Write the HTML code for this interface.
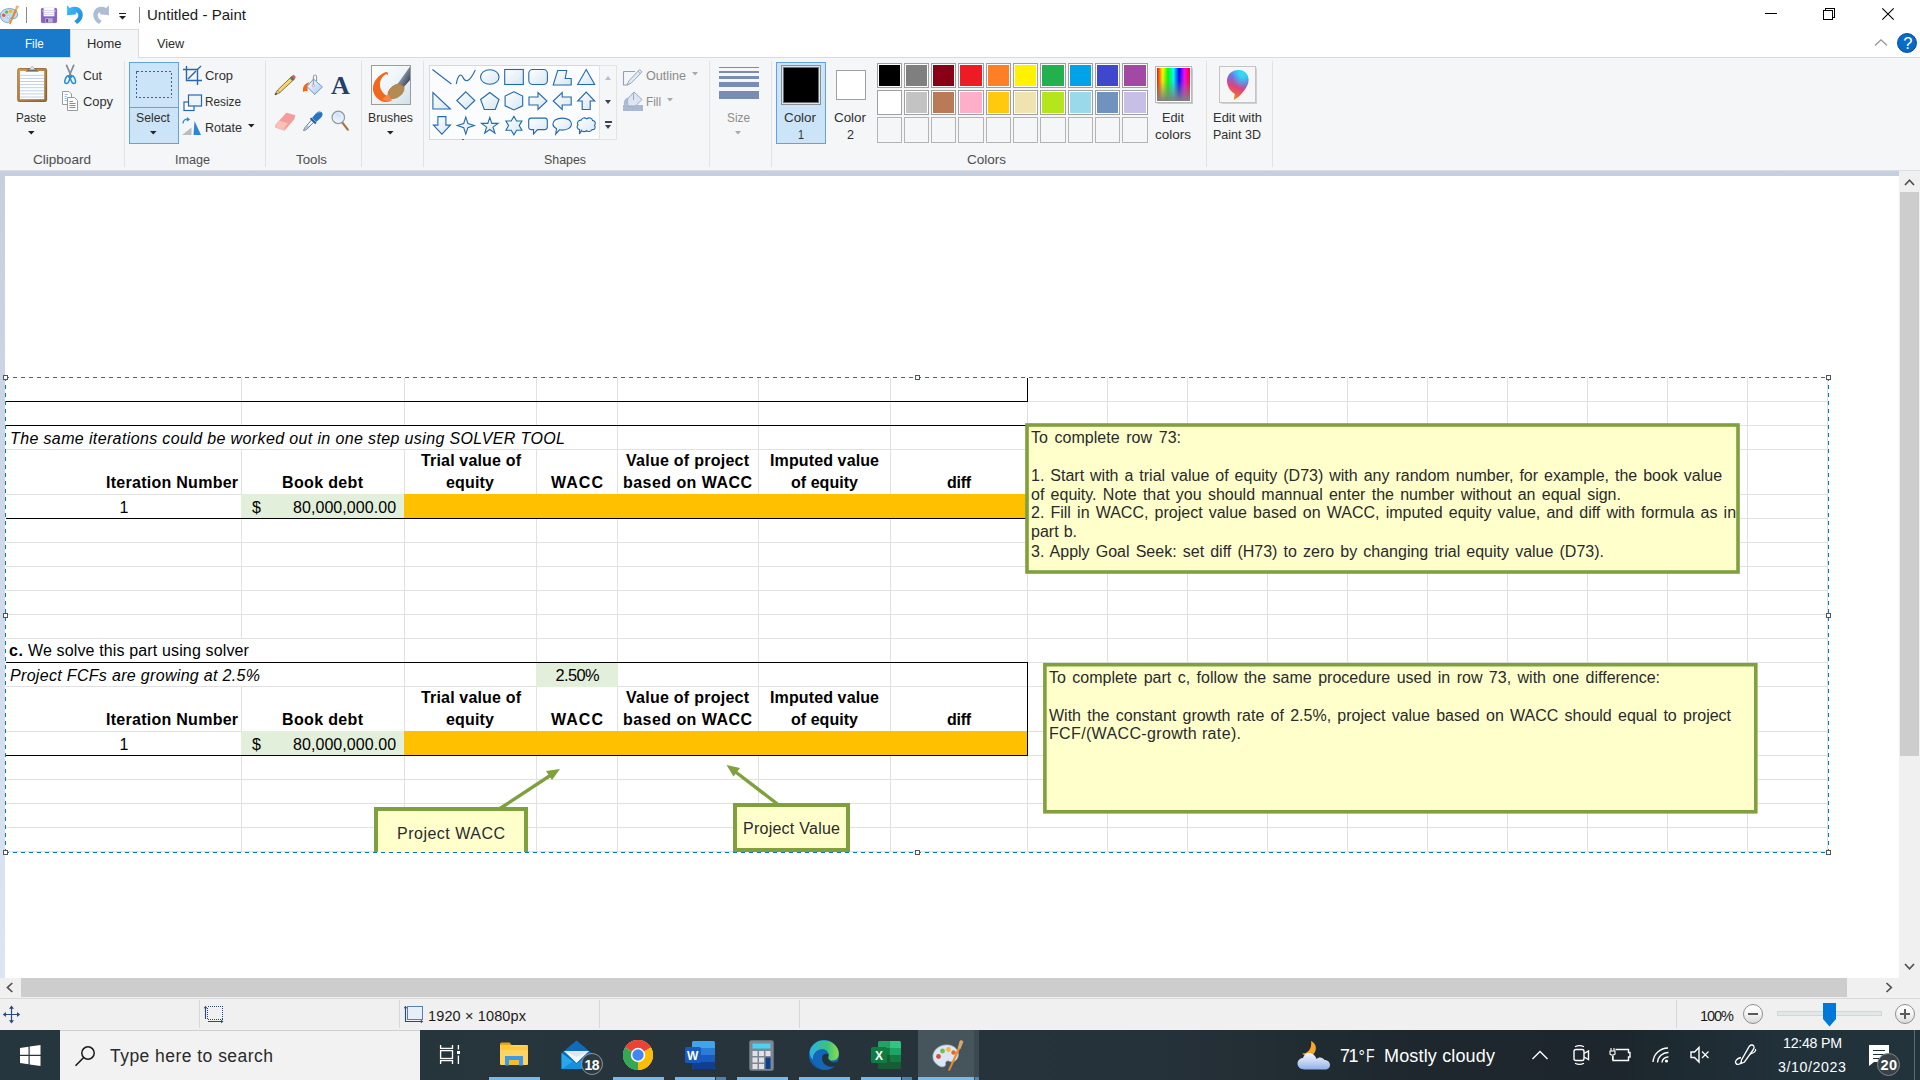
<!DOCTYPE html>
<html><head><meta charset="utf-8"><title>Untitled - Paint</title>
<style>
html,body{margin:0;padding:0}
body{width:1920px;height:1080px;overflow:hidden;position:relative;background:#fff;font-family:'Liberation Sans',sans-serif}
div,span,svg{box-sizing:border-box}
svg{position:absolute;overflow:visible}
</style></head><body>

<div style="position:absolute;left:0px;top:0px;width:1920px;height:30px;background:#fff"></div>
<div style="position:absolute;left:0px;top:30px;width:1920px;height:27px;background:#fff"></div>
<div style="position:absolute;left:0px;top:57px;width:1920px;height:114px;background:#f5f6f7;border-top:1px solid #dadbdc;border-bottom:1px solid #dcdde0"></div>
<div style="position:absolute;left:0px;top:171px;width:1920px;height:807px;background:linear-gradient(#c5cfe0,#dbe5f3)"></div>
<div style="position:absolute;left:5px;top:176px;width:1894px;height:802px;background:#fff"></div>
<div style="position:absolute;left:1899px;top:171px;width:21px;height:807px;background:#f0f0f0"></div>
<div style="position:absolute;left:1900px;top:192px;width:19px;height:564px;background:#cdcdcd"></div>
<div style="position:absolute;left:0px;top:978px;width:1920px;height:20px;background:#f0f0f0"></div>
<div style="position:absolute;left:21px;top:978px;width:1826px;height:19px;background:#cdcdcd"></div>
<div style="position:absolute;left:0px;top:998px;width:1920px;height:32px;background:#f0f0f0;border-top:1px solid #d9d9d9"></div>
<div style="position:absolute;left:0px;top:1030px;width:1920px;height:50px;background:linear-gradient(90deg,#25363f 0%,#27343b 35%,#263239 60%,#1d272d 74%,#1c262c 84%,#21313a 93%,#22333c 100%)"></div>
<svg style="left:0;top:0" width="30" height="30" viewBox="0 0 30 30">
<path d="M0.300 15.500 C0.300 11.500 4.500 8.600 9.500 8.600 C14.500 8.600 18 11.300 17.500 15 C17 18.500 14 19.200 12.300 18.300 C10.800 17.600 9.300 18.800 9.800 20.300 C10.400 22.200 8 23.300 5.300 22.300 C2.300 21.200 0.300 18.500 0.300 15.500Z" fill="#c3dcf1" stroke="#6f9bcb" stroke-width="0.900"/>
<circle cx="3.700" cy="15.200" r="1.700" fill="#e2564d"/><circle cx="6.600" cy="12.100" r="1.700" fill="#62b84a"/><circle cx="10.600" cy="11.300" r="1.700" fill="#f0b62e"/><circle cx="8.300" cy="16.500" r="1.300" fill="#eef5fb" stroke="#7fa5d0" stroke-width="0.500"/>
<path d="M9.300 23.800 L15.200 9.200 L16.900 9.900 L10.300 24Z" fill="#f08a24" stroke="#c96a18" stroke-width="0.400"/>
<path d="M15.200 9.300 L16 5.600 L19.300 6 L16.900 9.900Z" fill="#e7b469"/>
</svg>
<div style="position:absolute;left:26px;top:7px;width:1px;height:16px;background:#8a8a8a"></div>
<svg style="left:41px;top:8px" width="16" height="15" viewBox="0 0 16 15">
<rect x="0.400" y="0.400" width="15.200" height="14.200" rx="0.800" fill="#8763c6" stroke="#7650b8" stroke-width="0.800"/>
<rect x="2.600" y="0" width="10.800" height="8.300" fill="#fbfaff"/>
<rect x="2.600" y="2" width="10.800" height="0.700" fill="#cfc6e6"/><rect x="2.600" y="4" width="10.800" height="0.700" fill="#cfc6e6"/><rect x="2.600" y="6" width="10.800" height="0.700" fill="#cfc6e6"/>
<rect x="4.300" y="10.200" width="7.400" height="4.400" fill="#b9b3c6"/><rect x="5.200" y="11" width="1.800" height="3.200" fill="#6a4aa8"/>
<rect x="1.200" y="2.500" width="0.800" height="1" fill="#e6def5"/><rect x="14" y="2.500" width="0.800" height="1" fill="#e6def5"/>
</svg>
<svg style="left:0;top:0" width="120" height="30" viewBox="0 0 120 30">
<defs><linearGradient id="ug" x1="0" y1="0" x2="1" y2="1"><stop offset="0" stop-color="#3fc0ff"/><stop offset="1" stop-color="#1a84dc"/></linearGradient></defs>
<path d="M67.100 5.300 L69.800 8 C74.500 5.300 80.500 6.800 82.300 12 C83.900 17 81 21.500 77 24 L74.300 21 C77 19.300 78.800 17 78.200 14.600 C77.700 12.800 76.300 12.400 75.300 12.600 L76.500 14.300 L67.100 15.200Z" fill="url(#ug)"/>
<path d="M108.900 5.300 L106.200 8 C101.500 5.300 95.500 6.800 93.700 12 C92.100 17 95 21.500 99 24 L101.700 21 C99 19.300 97.200 17 97.800 14.600 C98.300 12.800 99.700 12.400 100.700 12.600 L99.500 14.300 L108.900 15.200Z" fill="#aebdd4"/>
</svg>
<div style="position:absolute;left:119px;top:13px;width:7px;height:1px;background:#222"></div>
<svg style="left:119px;top:16px" width="7" height="4" viewBox="0 0 7 4"><path d="M0 0 H7 L3.5 3.6Z" fill="#222"/></svg>
<div style="position:absolute;left:139px;top:7px;width:1px;height:16px;background:#9a9a9a"></div>
<span style="position:absolute;left:147px;top:7px;font-family:'Liberation Sans',sans-serif;font-size:15px;line-height:1;white-space:pre;color:#1a1a1a;font-weight:normal;font-style:normal;letter-spacing:0.04px;">Untitled - Paint</span>
<svg style="left:0;top:0" width="1920" height="30" shape-rendering="crispEdges">
<rect x="1765" y="13" width="12" height="1" fill="#000"/>
<rect x="1823.5" y="10.5" width="9" height="9" fill="none" stroke="#000"/>
<path d="M1825.5 10 V8.5 H1834.5 V17.5 H1833" fill="none" stroke="#000"/>
</svg>
<svg style="left:0;top:0" width="1920" height="30"><path d="M1882.3 8.3 L1893.7 19.7 M1893.7 8.3 L1882.3 19.7" stroke="#000" stroke-width="1.1" fill="none"/></svg>
<div style="position:absolute;left:0px;top:29px;width:70px;height:28px;background:#1979ca"></div>
<span style="position:absolute;left:25.3px;top:37px;font-family:'Liberation Sans',sans-serif;font-size:13.4px;line-height:1;white-space:pre;color:#fff;font-weight:normal;font-style:normal;transform:scaleX(0.8666);transform-origin:0 50%;">File</span>
<div style="position:absolute;left:70px;top:29px;width:69px;height:29px;background:#f5f6f7;border:1px solid #dadbdc;border-bottom:none"></div>
<span style="position:absolute;left:87px;top:37px;font-family:'Liberation Sans',sans-serif;font-size:13.4px;line-height:1;white-space:pre;color:#2b2b2b;font-weight:normal;font-style:normal;transform:scaleX(0.9655);transform-origin:0 50%;">Home</span>
<span style="position:absolute;left:157px;top:37px;font-family:'Liberation Sans',sans-serif;font-size:13.4px;line-height:1;white-space:pre;color:#2b2b2b;font-weight:normal;font-style:normal;transform:scaleX(0.9480);transform-origin:0 50%;">View</span>
<svg style="left:1874px;top:38px" width="14" height="9" viewBox="0 0 14 9"><path d="M1 7.5 L7 1.8 L13 7.5" fill="none" stroke="#8f8f8f" stroke-width="1.1"/></svg>
<div style="position:absolute;left:1897px;top:33px;width:20px;height:20px;background:radial-gradient(circle at 45% 40%,#0a72d2,#0063c0);border-radius:50%;border:1px solid #0a4c90"></div>
<span style="position:absolute;left:1903.3px;top:35px;font-family:'Liberation Sans',sans-serif;font-size:16.5px;line-height:1;white-space:pre;color:#fff;font-weight:normal;font-style:normal;">?</span>
<div style="position:absolute;left:124px;top:61px;width:1px;height:106px;background:#e1e2e4"></div>
<div style="position:absolute;left:265px;top:61px;width:1px;height:106px;background:#e1e2e4"></div>
<div style="position:absolute;left:361px;top:61px;width:1px;height:106px;background:#e1e2e4"></div>
<div style="position:absolute;left:423px;top:61px;width:1px;height:106px;background:#e1e2e4"></div>
<div style="position:absolute;left:709px;top:61px;width:1px;height:106px;background:#e1e2e4"></div>
<div style="position:absolute;left:771px;top:61px;width:1px;height:106px;background:#e1e2e4"></div>
<div style="position:absolute;left:1206px;top:61px;width:1px;height:106px;background:#e1e2e4"></div>
<div style="position:absolute;left:1272px;top:61px;width:1px;height:106px;background:#e1e2e4"></div>
<span style="position:absolute;left:33px;top:153px;font-family:'Liberation Sans',sans-serif;font-size:13.4px;line-height:1;white-space:pre;color:#4d4d4d;font-weight:normal;font-style:normal;transform:scaleX(1.0117);transform-origin:0 50%;">Clipboard</span>
<span style="position:absolute;left:175px;top:153px;font-family:'Liberation Sans',sans-serif;font-size:13.4px;line-height:1;white-space:pre;color:#4d4d4d;font-weight:normal;font-style:normal;transform:scaleX(0.9404);transform-origin:0 50%;">Image</span>
<span style="position:absolute;left:296px;top:153px;font-family:'Liberation Sans',sans-serif;font-size:13.4px;line-height:1;white-space:pre;color:#4d4d4d;font-weight:normal;font-style:normal;transform:scaleX(0.9915);transform-origin:0 50%;">Tools</span>
<span style="position:absolute;left:544px;top:153px;font-family:'Liberation Sans',sans-serif;font-size:13.4px;line-height:1;white-space:pre;color:#4d4d4d;font-weight:normal;font-style:normal;transform:scaleX(0.9247);transform-origin:0 50%;">Shapes</span>
<span style="position:absolute;left:967px;top:153px;font-family:'Liberation Sans',sans-serif;font-size:13.4px;line-height:1;white-space:pre;color:#4d4d4d;font-weight:normal;font-style:normal;transform:scaleX(1.0077);transform-origin:0 50%;">Colors</span>
<svg style="left:0;top:0" width="130" height="170" viewBox="0 0 130 170">
<defs><linearGradient id="cb" x1="0" y1="0" x2="1" y2="1"><stop offset="0" stop-color="#cfa060"/><stop offset="1" stop-color="#9a6a34"/></linearGradient></defs>
<rect x="17.300" y="68.100" width="29.800" height="33.800" rx="2.200" fill="url(#cb)"/>
<rect x="17.800" y="68.600" width="28.800" height="32.800" rx="1.800" fill="none" stroke="#8a5a28" stroke-width="0.600"/>
<rect x="20" y="71" width="24.200" height="28.200" fill="#ffffff"/>
<g stroke="#b9cde0" stroke-width="0.900"><path d="M20 75.300H44.200M20 78.400H44.200M20 81.500H44.200M20 84.600H44.200M20 87.700H44.200M20 90.800H44.200M20 93.900H44.200M20 97H44.200"/></g>
<path d="M25.600 72 L29.500 68.300 H34.900 L38.800 72Z" fill="#5a5a5a"/>
<path d="M28.800 69.800 L32.200 66.300 L35.600 69.800Z" fill="#e8e8e8" stroke="#8a8a8a" stroke-width="0.600"/>
<path d="M26.500 71.300 H38" stroke="#d8d8d8" stroke-width="0.700"/>
</svg>
<span style="position:absolute;left:16px;top:111px;font-family:'Liberation Sans',sans-serif;font-size:13.4px;line-height:1;white-space:pre;color:#303030;font-weight:normal;font-style:normal;transform:scaleX(0.8759);transform-origin:0 50%;">Paste</span>
<svg style="left:27.7px;top:130.8px" width="6.6" height="3.4" viewBox="0 0 6.6 3.4"><path d="M0 0 H6.6 L3.3 3.4Z" fill="#222"/></svg>
<svg style="left:0;top:0" width="130" height="170" viewBox="0 0 130 170">
<path d="M66.600 65.300 L71.600 77 M73.700 65.300 L68.700 77" stroke="#7f8b99" stroke-width="1.700" fill="none" stroke-linecap="round"/>
<ellipse cx="67.300" cy="79.700" rx="2.100" ry="4" fill="none" stroke="#1f8fdb" stroke-width="1.500" transform="rotate(22 67.300 79.700)"/>
<ellipse cx="73" cy="79.700" rx="2.100" ry="4" fill="none" stroke="#1f8fdb" stroke-width="1.500" transform="rotate(-22 73 79.700)"/>
</svg>
<span style="position:absolute;left:83px;top:69px;font-family:'Liberation Sans',sans-serif;font-size:13.4px;line-height:1;white-space:pre;color:#303030;font-weight:normal;font-style:normal;transform:scaleX(0.9115);transform-origin:0 50%;">Cut</span>
<svg style="left:61px;top:90px" width="18" height="22" viewBox="0 0 18 22">
<path d="M1.5 1.5 H8 L10.5 4 V14.5 H1.5Z" fill="#fff" stroke="#9a9a9a"/>
<path d="M6.5 7.5 H13.5 L16.5 10.5 V20.5 H6.5Z" fill="#fff" stroke="#9a9a9a"/>
<g stroke="#5b93d3" stroke-width="1"><path d="M8.5 11.5H12M8.5 13.5H14.5M8.5 15.5H14.5M8.5 17.5H14.5"/></g>
<g stroke="#a8c3e6" stroke-width="1"><path d="M3.5 4.5H7M3.5 6.5H6M3.5 8.5H6M3.5 10.5H6"/></g>
</svg>
<span style="position:absolute;left:83px;top:95px;font-family:'Liberation Sans',sans-serif;font-size:13.4px;line-height:1;white-space:pre;color:#303030;font-weight:normal;font-style:normal;transform:scaleX(0.9595);transform-origin:0 50%;">Copy</span>
<div style="position:absolute;left:129px;top:62px;width:50px;height:82px;background:#cce4f7;border:1px solid #62a2e4"></div>
<div style="position:absolute;left:130px;top:107px;width:48px;height:1px;background:#62a2e4"></div>
<svg style="left:136px;top:71px" width="36" height="27" shape-rendering="crispEdges"><rect x="0.5" y="0.5" width="35" height="26" fill="none" stroke="#2a66ad" stroke-dasharray="2 2"/></svg>
<span style="position:absolute;left:136px;top:111px;font-family:'Liberation Sans',sans-serif;font-size:13.4px;line-height:1;white-space:pre;color:#303030;font-weight:normal;font-style:normal;transform:scaleX(0.9135);transform-origin:0 50%;">Select</span>
<svg style="left:149.7px;top:130.8px" width="6.6" height="3.4" viewBox="0 0 6.6 3.4"><path d="M0 0 H6.6 L3.3 3.4Z" fill="#222"/></svg>
<svg style="left:182px;top:65px" width="21" height="21" viewBox="0 0 21 21">
<path d="M4.5 1 V15.5 H20 M1 4.5 H15.5 V20" fill="none" stroke="#2a66ad" stroke-width="1.4"/>
<path d="M6 14 L14 6" stroke="#2a66ad" stroke-width="1.4"/><path d="M15.5 4.5 L19 1" stroke="#2a66ad" stroke-width="1.2"/>
</svg>
<span style="position:absolute;left:205px;top:69px;font-family:'Liberation Sans',sans-serif;font-size:13.4px;line-height:1;white-space:pre;color:#303030;font-weight:normal;font-style:normal;transform:scaleX(0.9645);transform-origin:0 50%;">Crop</span>
<svg style="left:182.500px;top:93.500px" width="20" height="18" viewBox="0 0 20 18">
<rect x="1" y="8" width="10" height="8.5" fill="#fff" stroke="#2a66ad" stroke-width="1.2"/>
<rect x="5.5" y="1" width="13" height="11" fill="#eef4fb" stroke="#2a66ad" stroke-width="1.2"/>
</svg>
<span style="position:absolute;left:205px;top:95px;font-family:'Liberation Sans',sans-serif;font-size:13.4px;line-height:1;white-space:pre;color:#303030;font-weight:normal;font-style:normal;transform:scaleX(0.8794);transform-origin:0 50%;">Resize</span>
<svg style="left:181px;top:116px" width="21" height="20" viewBox="0 0 21 20">
<path d="M1 19 H10.5 V11.5Z" fill="#b9bdc2"/>
<path d="M12.5 19 H20 L13.5 5Z" fill="#2f86d4"/>
<path d="M2 7.5 C2 4 5 2.5 7.5 3.5" fill="none" stroke="#2f86d4" stroke-width="1.3"/><path d="M6.2 1 L9.2 3.8 L5.6 5.5Z" fill="#2f86d4"/>
</svg>
<span style="position:absolute;left:205px;top:121px;font-family:'Liberation Sans',sans-serif;font-size:13.4px;line-height:1;white-space:pre;color:#303030;font-weight:normal;font-style:normal;transform:scaleX(0.9378);transform-origin:0 50%;">Rotate</span>
<svg style="left:247.7px;top:124.3px" width="6.6" height="3.4" viewBox="0 0 6.6 3.4"><path d="M0 0 H6.6 L3.3 3.4Z" fill="#222"/></svg>
<svg style="left:0;top:0" width="430" height="170" viewBox="0 0 430 170">
<defs>
<linearGradient id="bk" x1="0" y1="0" x2="1" y2="1"><stop offset="0" stop-color="#ffffff"/><stop offset="1" stop-color="#a9c8ec"/></linearGradient>
<linearGradient id="brbg" x1="0" y1="0" x2="1" y2="1"><stop offset="0" stop-color="#ffffff"/><stop offset="0.600" stop-color="#eaf2f6"/><stop offset="1" stop-color="#cfe0e8"/></linearGradient>
<linearGradient id="hdl" x1="0" y1="0" x2="1" y2="1"><stop offset="0" stop-color="#e8eef4"/><stop offset="0.450" stop-color="#7f8ea2"/><stop offset="1" stop-color="#1d2430"/></linearGradient>
<radialGradient id="lens" cx="0.500" cy="0.300" r="0.700"><stop offset="0" stop-color="#cfe2f7"/><stop offset="1" stop-color="#f4f8fd"/></radialGradient>
</defs>
<!-- pencil -->
<path d="M275 94.800 L277.600 90 L291.600 76.600 L294.200 79.300 L279.900 92.500Z" fill="#f6d56c" stroke="#6d5b2b" stroke-width="0.800"/>
<path d="M275 94.800 L277.600 90 L279.900 92.500Z" fill="#e9d3a8" stroke="#6d5b2b" stroke-width="0.500"/><path d="M275 94.800 L275.900 92.700 L277.100 93.900Z" fill="#222"/>
<path d="M289.800 78.300 L291.600 76.600 L294.200 79.300 L292.400 81Z" fill="#3c8a4d"/>
<path d="M291.600 76.600 L292.600 75.700 C293.200 75.200 294 75.300 294.500 75.800 L295 76.400 C295.500 77 295.400 77.700 294.900 78.200 L294.200 79.300Z" fill="#e2606a" stroke="#8a3a3a" stroke-width="0.400"/>
<!-- bucket -->
<path d="M303.300 92 C302 88 304 83.500 309.500 82 C307 85.500 307.500 89 307.800 91.300 C306.300 90.600 304.800 91.200 303.300 92Z" fill="#f2691c"/>
<path d="M313.500 79 L322.400 87 L314.600 94.400 L307 86.600Z" fill="url(#bk)" stroke="#5a8fd2" stroke-width="0.900"/>
<path d="M313.400 85.300 V77 C313.400 74.300 316.600 74.300 316.600 77 V81" fill="none" stroke="#9a9a9a" stroke-width="1.100"/><circle cx="313.400" cy="85.600" r="1.100" fill="#fff" stroke="#8a8a8a" stroke-width="0.600"/>
<!-- eraser -->
<path d="M275.800 124.800 L286.400 113.100 L295 115.500 L293.800 119.400 L284.400 130.300 L275.400 127.200Z" fill="#f59c9c" stroke="#eb8f8f" stroke-width="0.500"/>
<path d="M275.800 124.800 L279.500 120.800 L288 123.200 L284.600 127.200 L284.400 130.300 L275.400 127.200Z" fill="#fbc0b4"/>
<!-- dropper -->
<path d="M303.600 130.600 L304.600 128 L311.500 120 L313.700 122.200 L306.500 129.600Z" fill="#f2f6fa" stroke="#5a5f66" stroke-width="0.800"/>
<path d="M304.600 128.300 L307.500 125 L309 126.500 L306 129.600Z" fill="#9cc4ea"/>
<path d="M309.800 118.800 L315.200 124.200 L316.600 122.800 L311.200 117.400Z" fill="#1e5ea8"/>
<path d="M312 118 L315.800 113.500 C317.200 111.600 319.800 110.800 321.500 112 C323.200 113.400 322.800 115.800 321.200 117.500 L316.200 122Z" fill="#2c72c2"/>
<path d="M316.500 113.500 C317.800 112 319.500 111.800 320.500 112.500" fill="none" stroke="#7fb2e8" stroke-width="0.900"/>
<!-- magnifier -->
<path d="M342.600 122.800 L347.800 129.600" stroke="#a8723c" stroke-width="2.200" stroke-linecap="round"/>
<circle cx="338.300" cy="117.400" r="6.200" fill="url(#lens)" stroke="#8f979f" stroke-width="1.200"/>
<!-- brushes -->
<rect x="371.500" y="65.500" width="39" height="39" fill="url(#brbg)" stroke="#9c9c9c"/>
<path d="M410 66.500 L410 80 L402.500 88.500 L397.500 84Z" fill="url(#hdl)"/>
<ellipse cx="396" cy="91.300" rx="9.200" ry="6" transform="rotate(-38 396 91.300)" fill="#b58a52" stroke="#94693a" stroke-width="0.500"/>
<path d="M384.500 72.500 C386.500 71.300 388.500 72.300 388 74 C387.600 75.200 386.300 75 386.600 74 C385.500 74.300 384.300 75.300 383.300 76.300 C379.500 80 379 86 381.500 90.500 C383 93.200 385.500 95.500 388.500 96.500 L391.500 100.300 C388 102.800 383 102.500 379.500 100 C374 96.500 371.800 90 373.500 84.500 C375 79.500 379.500 75 384.500 72.500Z" fill="#f2691c"/>
<path d="M382.500 98.800 L388.500 94.200 L392 100.200 C389 102.300 385.500 101.800 382.500 98.800Z" fill="#f9844a"/>
</svg>
<span style="position:absolute;left:331px;top:73px;font-family:'Liberation Serif',serif;font-size:26px;line-height:1;white-space:pre;color:#1f3f6e;font-weight:bold;font-style:normal;letter-spacing:0.72px;">A</span>
<span style="position:absolute;left:368px;top:111px;font-family:'Liberation Sans',sans-serif;font-size:13.4px;line-height:1;white-space:pre;color:#303030;font-weight:normal;font-style:normal;transform:scaleX(0.9160);transform-origin:0 50%;">Brushes</span>
<svg style="left:386.7px;top:130.8px" width="6.6" height="3.4" viewBox="0 0 6.6 3.4"><path d="M0 0 H6.6 L3.3 3.4Z" fill="#222"/></svg>
<div style="position:absolute;left:429px;top:65px;width:171px;height:75px;background:#fbfcfd;border:1px solid #d5d8dc"></div>
<div style="position:absolute;left:599px;top:65px;width:18px;height:75px;background:#f5f6f7;border:1px solid #e1e3e6"></div>
<svg style="left:0;top:0" width="1920" height="180"><defs><linearGradient id="sg" x1="0" y1="0" x2="1" y2="1"><stop offset="0" stop-color="#ffffff"/><stop offset="1" stop-color="#d5e7f2"/></linearGradient></defs><g transform="translate(431.9 67)" fill="url(#sg)" stroke="#2368b0" stroke-width="1.1" stroke-linejoin="miter"><path d="M0.5 2.5 L19.5 17" fill="none"/></g><g transform="translate(455.8 67)" fill="url(#sg)" stroke="#2368b0" stroke-width="1.1" stroke-linejoin="miter"><path d="M0.5 17 C2 8 5 6 7 10 C9 15 13 17 19.5 3" fill="none"/></g><g transform="translate(479.8 67)" fill="url(#sg)" stroke="#2368b0" stroke-width="1.1" stroke-linejoin="miter"><ellipse cx="10" cy="10" rx="9.3" ry="7.2"/></g><g transform="translate(503.9 67)" fill="url(#sg)" stroke="#2368b0" stroke-width="1.1" stroke-linejoin="miter"><rect x="0.8" y="2.5" width="18.6" height="15"/></g><g transform="translate(528 67)" fill="url(#sg)" stroke="#2368b0" stroke-width="1.1" stroke-linejoin="miter"><rect x="0.8" y="2.5" width="18.6" height="15" rx="4"/></g><g transform="translate(552.2 67)" fill="url(#sg)" stroke="#2368b0" stroke-width="1.1" stroke-linejoin="miter"><path d="M1 18 L5.5 3.5 H14.5 L13 11.5 H19 V18Z"/></g><g transform="translate(576.2 67)" fill="url(#sg)" stroke="#2368b0" stroke-width="1.1" stroke-linejoin="miter"><path d="M1.5 17.5 L10 2.5 L18.5 17.5Z"/></g><g transform="translate(431.9 91)" fill="url(#sg)" stroke="#2368b0" stroke-width="1.1" stroke-linejoin="miter"><path d="M1 1.5 V18 H18.5Z"/></g><g transform="translate(455.8 91)" fill="url(#sg)" stroke="#2368b0" stroke-width="1.1" stroke-linejoin="miter"><path d="M10 0.8 L19 9.5 L10 18.2 L1 9.5Z"/></g><g transform="translate(479.8 91)" fill="url(#sg)" stroke="#2368b0" stroke-width="1.1" stroke-linejoin="miter"><path d="M10 1.5 L19.2 8.5 L15.5 18.5 H4.5 L0.8 8.5Z"/></g><g transform="translate(503.9 91)" fill="url(#sg)" stroke="#2368b0" stroke-width="1.1" stroke-linejoin="miter"><path d="M10 0.8 L18.8 5 V14.8 L10 19 L1.2 14.8 V5Z"/></g><g transform="translate(528 91)" fill="url(#sg)" stroke="#2368b0" stroke-width="1.1" stroke-linejoin="miter"><path d="M1 6 H10 V1.5 L19 10 L10 18.5 V14 H1Z"/></g><g transform="translate(552.2 91)" fill="url(#sg)" stroke="#2368b0" stroke-width="1.1" stroke-linejoin="miter"><path d="M19 6 H10 V1.5 L1 10 L10 18.5 V14 H19Z"/></g><g transform="translate(576.2 91)" fill="url(#sg)" stroke="#2368b0" stroke-width="1.1" stroke-linejoin="miter"><path d="M6 18.5 V10 H1.5 L10 1 L18.5 10 H14 V18.5Z"/></g><g transform="translate(431.9 115.6)" fill="url(#sg)" stroke="#2368b0" stroke-width="1.1" stroke-linejoin="miter"><path d="M6 1 V9.5 H1.5 L10 18.5 L18.5 9.5 H14 V1Z"/></g><g transform="translate(455.8 115.6)" fill="url(#sg)" stroke="#2368b0" stroke-width="1.1" stroke-linejoin="miter"><path d="M10 1.5 L12.1 7.9 L18.5 10 L12.1 12.1 L10 18.5 L7.9 12.1 L1.5 10 L7.9 7.9Z"/></g><g transform="translate(479.8 115.6)" fill="url(#sg)" stroke="#2368b0" stroke-width="1.1" stroke-linejoin="miter"><path d="M10 1.8 L12 7.8 H18.300 L13.2 11.5 L15.100 17.600 L10 13.9 L4.900 17.600 L6.800 11.5 L1.700 7.800 H8Z"/></g><g transform="translate(503.9 115.6)" fill="url(#sg)" stroke="#2368b0" stroke-width="1.1" stroke-linejoin="miter"><path d="M10 0.8 L12.7 5.4 H18 L15.3 10 L18 14.6 H12.7 L10 19.2 L7.3 14.6 H2 L4.7 10 L2 5.4 H7.3Z"/></g><g transform="translate(528 115.6)" fill="url(#sg)" stroke="#2368b0" stroke-width="1.1" stroke-linejoin="miter"><path d="M3 2.5 H17 Q19.3 2.5 19.3 5 V11.5 Q19.3 14 17 14 H9.5 L5.5 18.5 V14 H3 Q0.7 14 0.7 11.5 V5 Q0.7 2.5 3 2.5Z"/></g><g transform="translate(552.2 115.6)" fill="url(#sg)" stroke="#2368b0" stroke-width="1.1" stroke-linejoin="miter"><path d="M10 2.5 C15.5 2.5 19.3 5 19.3 8.5 C19.3 12 15.5 14.5 10 14.5 C9 14.5 8 14.4 7.2 14.2 L3.5 18.5 L4.3 13.2 C2 12 0.7 10.4 0.7 8.5 C0.7 5 4.5 2.5 10 2.5Z"/></g><g transform="translate(576.2 115.6)" fill="url(#sg)" stroke="#2368b0" stroke-width="1.1" stroke-linejoin="miter"><path d="M5 4.5 C6 2 9 1.8 10.5 3.2 C12.5 1.5 16 2.3 16.3 4.8 C19 5 20 8 18.3 9.7 C20 11.8 18.3 14.5 15.8 14 C14.8 16.3 11.5 16.5 10.2 15 C8.8 16.5 6.2 16.3 5.4 14.8 L3.3 18.5 L3.4 14 C0.8 13.5 0.2 10.8 1.8 9.3 C0.3 7.3 2 4.3 5 4.5Z"/></g></svg>
<div style="position:absolute;left:462px;top:139px;width:2px;height:1px;background:#2e74b5"></div>
<svg style="left:605.0px;top:76.0px" width="6" height="4" viewBox="0 0 6 4"><path d="M0 4 H6 L3 0Z" fill="#b9bec6"/></svg>
<svg style="left:605.0px;top:100.0px" width="6" height="4" viewBox="0 0 6 4"><path d="M0 0 H6 L3.0 4Z" fill="#3c4454"/></svg>
<div style="position:absolute;left:604.5px;top:121px;width:7px;height:1.5px;background:#3c4454"></div>
<svg style="left:605.0px;top:124.5px" width="6" height="4" viewBox="0 0 6 4"><path d="M0 0 H6 L3.0 4Z" fill="#3c4454"/></svg>
<svg style="left:622px;top:67px" width="22" height="19" viewBox="0 0 22 19">
<path d="M1.500 4.500 H13 M1.500 4.500 V18 H6" fill="none" stroke="#8f9fbd" stroke-width="1.100"/>
<path d="M5 18 L6.800 14 L17.600 2.500 L20 4.800 L9 16.300Z" fill="#e4e9f2" stroke="#8f9fbd" stroke-width="0.900"/><path d="M16 4.200 L18.400 6.500" stroke="#8f9fbd" stroke-width="0.800"/>
</svg>
<span style="position:absolute;left:646px;top:69px;font-family:'Liberation Sans',sans-serif;font-size:13.4px;line-height:1;white-space:pre;color:#8c8c8c;font-weight:normal;font-style:normal;transform:scaleX(0.9426);transform-origin:0 50%;">Outline</span>
<svg style="left:691.5px;top:72.25px" width="6" height="3.5" viewBox="0 0 6 3.5"><path d="M0 0 H6 L3.0 3.5Z" fill="#a9a9a9"/></svg>
<svg style="left:622px;top:91px" width="22" height="21" viewBox="0 0 22 21">
<rect x="1" y="14" width="20" height="6" fill="#a9b8d3"/>
<path d="M12 1 L20 8.5 L13.5 15 H6 L4.5 9Z" fill="#dfe5f0" stroke="#9aa9c4" stroke-width="1"/>
<path d="M2 14 C1 10 3.5 7 6.5 6.5 L6 13.5Z" fill="#a9b8d3"/>
<path d="M11.5 9 V2" stroke="#9aa9c4" stroke-width="1"/>
</svg>
<span style="position:absolute;left:646px;top:95px;font-family:'Liberation Sans',sans-serif;font-size:13.4px;line-height:1;white-space:pre;color:#8c8c8c;font-weight:normal;font-style:normal;transform:scaleX(0.8767);transform-origin:0 50%;">Fill</span>
<svg style="left:666.5px;top:98.25px" width="6" height="3.5" viewBox="0 0 6 3.5"><path d="M0 0 H6 L3.0 3.5Z" fill="#a9a9a9"/></svg>
<div style="position:absolute;left:719px;top:67px;width:40px;height:1px;background:#788db1"></div>
<div style="position:absolute;left:719px;top:71px;width:40px;height:2px;background:#788db1"></div>
<div style="position:absolute;left:719px;top:76px;width:40px;height:3px;background:#788db1"></div>
<div style="position:absolute;left:719px;top:82px;width:40px;height:5px;background:#788db1"></div>
<div style="position:absolute;left:719px;top:91px;width:40px;height:8px;background:#788db1"></div>
<span style="position:absolute;left:727px;top:111px;font-family:'Liberation Sans',sans-serif;font-size:13.4px;line-height:1;white-space:pre;color:#8c8c8c;font-weight:normal;font-style:normal;transform:scaleX(0.8825);transform-origin:0 50%;">Size</span>
<svg style="left:735.0px;top:130.75px" width="6" height="3.5" viewBox="0 0 6 3.5"><path d="M0 0 H6 L3.0 3.5Z" fill="#a9a9a9"/></svg>
<div style="position:absolute;left:776px;top:62px;width:50px;height:82px;background:#cce4f7;border:1px solid #62a2e4"></div>
<div style="position:absolute;left:781px;top:65px;width:40px;height:40px;background:#dbe5ef;border:1px solid #8e8e8e"></div>
<div style="position:absolute;left:783px;top:67px;width:36px;height:36px;background:#000;border:1px solid #6e6e6e"></div>
<span style="position:absolute;left:784px;top:111px;font-family:'Liberation Sans',sans-serif;font-size:13.4px;line-height:1;white-space:pre;color:#303030;font-weight:normal;font-style:normal;transform:scaleX(1.0000);transform-origin:0 50%;">Color</span>
<span style="position:absolute;left:798px;top:128px;font-family:'Liberation Sans',sans-serif;font-size:13.4px;line-height:1;white-space:pre;color:#303030;font-weight:normal;font-style:normal;transform:scaleX(0.8050);transform-origin:0 50%;">1</span>
<div style="position:absolute;left:836px;top:70px;width:30px;height:30px;background:#fff;border:1px solid #a0a0a0"></div>
<span style="position:absolute;left:834px;top:111px;font-family:'Liberation Sans',sans-serif;font-size:13.4px;line-height:1;white-space:pre;color:#303030;font-weight:normal;font-style:normal;transform:scaleX(1.0000);transform-origin:0 50%;">Color</span>
<span style="position:absolute;left:847px;top:128px;font-family:'Liberation Sans',sans-serif;font-size:13.4px;line-height:1;white-space:pre;color:#303030;font-weight:normal;font-style:normal;transform:scaleX(0.9392);transform-origin:0 50%;">2</span>
<div style="position:absolute;left:877px;top:63px;width:25px;height:25px;background:#000000;border:1px solid #a0a0a0;box-shadow:inset 0 0 0 1px #fff"></div>
<div style="position:absolute;left:904px;top:63px;width:25px;height:25px;background:#7f7f7f;border:1px solid #a0a0a0;box-shadow:inset 0 0 0 1px #fff"></div>
<div style="position:absolute;left:931px;top:63px;width:25px;height:25px;background:#880015;border:1px solid #a0a0a0;box-shadow:inset 0 0 0 1px #fff"></div>
<div style="position:absolute;left:958px;top:63px;width:26px;height:25px;background:#ed1c24;border:1px solid #a0a0a0;box-shadow:inset 0 0 0 1px #fff"></div>
<div style="position:absolute;left:986px;top:63px;width:25px;height:25px;background:#ff7f27;border:1px solid #a0a0a0;box-shadow:inset 0 0 0 1px #fff"></div>
<div style="position:absolute;left:1013px;top:63px;width:25px;height:25px;background:#fff200;border:1px solid #a0a0a0;box-shadow:inset 0 0 0 1px #fff"></div>
<div style="position:absolute;left:1040px;top:63px;width:26px;height:25px;background:#22b14c;border:1px solid #a0a0a0;box-shadow:inset 0 0 0 1px #fff"></div>
<div style="position:absolute;left:1068px;top:63px;width:25px;height:25px;background:#00a2e8;border:1px solid #a0a0a0;box-shadow:inset 0 0 0 1px #fff"></div>
<div style="position:absolute;left:1095px;top:63px;width:25px;height:25px;background:#3f48cc;border:1px solid #a0a0a0;box-shadow:inset 0 0 0 1px #fff"></div>
<div style="position:absolute;left:1122px;top:63px;width:26px;height:25px;background:#a349a4;border:1px solid #a0a0a0;box-shadow:inset 0 0 0 1px #fff"></div>
<div style="position:absolute;left:877px;top:90px;width:25px;height:25px;background:#ffffff;border:1px solid #a0a0a0;box-shadow:inset 0 0 0 1px #fff"></div>
<div style="position:absolute;left:904px;top:90px;width:25px;height:25px;background:#c3c3c3;border:1px solid #a0a0a0;box-shadow:inset 0 0 0 1px #fff"></div>
<div style="position:absolute;left:931px;top:90px;width:25px;height:25px;background:#b97a57;border:1px solid #a0a0a0;box-shadow:inset 0 0 0 1px #fff"></div>
<div style="position:absolute;left:958px;top:90px;width:26px;height:25px;background:#ffaec9;border:1px solid #a0a0a0;box-shadow:inset 0 0 0 1px #fff"></div>
<div style="position:absolute;left:986px;top:90px;width:25px;height:25px;background:#ffc90e;border:1px solid #a0a0a0;box-shadow:inset 0 0 0 1px #fff"></div>
<div style="position:absolute;left:1013px;top:90px;width:25px;height:25px;background:#efe4b0;border:1px solid #a0a0a0;box-shadow:inset 0 0 0 1px #fff"></div>
<div style="position:absolute;left:1040px;top:90px;width:26px;height:25px;background:#b5e61d;border:1px solid #a0a0a0;box-shadow:inset 0 0 0 1px #fff"></div>
<div style="position:absolute;left:1068px;top:90px;width:25px;height:25px;background:#99d9ea;border:1px solid #a0a0a0;box-shadow:inset 0 0 0 1px #fff"></div>
<div style="position:absolute;left:1095px;top:90px;width:25px;height:25px;background:#7092be;border:1px solid #a0a0a0;box-shadow:inset 0 0 0 1px #fff"></div>
<div style="position:absolute;left:1122px;top:90px;width:26px;height:25px;background:#c8bfe7;border:1px solid #a0a0a0;box-shadow:inset 0 0 0 1px #fff"></div>
<div style="position:absolute;left:877px;top:117px;width:25px;height:26px;background:#f5f6f7;border:1px solid #b4b4b4"></div>
<div style="position:absolute;left:904px;top:117px;width:25px;height:26px;background:#f5f6f7;border:1px solid #b4b4b4"></div>
<div style="position:absolute;left:931px;top:117px;width:25px;height:26px;background:#f5f6f7;border:1px solid #b4b4b4"></div>
<div style="position:absolute;left:958px;top:117px;width:26px;height:26px;background:#f5f6f7;border:1px solid #b4b4b4"></div>
<div style="position:absolute;left:986px;top:117px;width:25px;height:26px;background:#f5f6f7;border:1px solid #b4b4b4"></div>
<div style="position:absolute;left:1013px;top:117px;width:25px;height:26px;background:#f5f6f7;border:1px solid #b4b4b4"></div>
<div style="position:absolute;left:1040px;top:117px;width:26px;height:26px;background:#f5f6f7;border:1px solid #b4b4b4"></div>
<div style="position:absolute;left:1068px;top:117px;width:25px;height:26px;background:#f5f6f7;border:1px solid #b4b4b4"></div>
<div style="position:absolute;left:1095px;top:117px;width:25px;height:26px;background:#f5f6f7;border:1px solid #b4b4b4"></div>
<div style="position:absolute;left:1122px;top:117px;width:26px;height:26px;background:#f5f6f7;border:1px solid #b4b4b4"></div>
<div style="position:absolute;left:1155px;top:66px;width:37px;height:37px;background:#fff;border:1px solid #b9b9b9;box-shadow:0.5px 0.5px 1px rgba(0,0,0,.18)"></div>
<div style="position:absolute;left:1157px;top:68px;width:33px;height:33px;background:linear-gradient(rgba(128,128,128,0) 0%,rgba(128,128,128,.15) 40%,rgba(128,128,128,1) 100%),linear-gradient(90deg,#ff0000,#ffff00 17%,#00ff00 33%,#00ffff 50%,#0000ff 67%,#ff00ff 83%,#ff0000)"></div>
<span style="position:absolute;left:1162px;top:111px;font-family:'Liberation Sans',sans-serif;font-size:13.4px;line-height:1;white-space:pre;color:#303030;font-weight:normal;font-style:normal;transform:scaleX(0.9533);transform-origin:0 50%;">Edit</span>
<span style="position:absolute;left:1155px;top:128px;font-family:'Liberation Sans',sans-serif;font-size:13.4px;line-height:1;white-space:pre;color:#303030;font-weight:normal;font-style:normal;transform:scaleX(1.0074);transform-origin:0 50%;">colors</span>
<div style="position:absolute;left:1219px;top:66px;width:37px;height:37px;background:#f6f6f6;border:1px solid #c4c4c4;box-shadow:0.5px 0.5px 1px rgba(0,0,0,.15)"></div>
<svg style="left:0;top:0" width="1300" height="170" viewBox="0 0 1300 170">
<defs><linearGradient id="p3" x1="0.650" y1="0" x2="0.350" y2="1"><stop offset="0" stop-color="#2bd3f3"/><stop offset="0.300" stop-color="#6d74e8"/><stop offset="0.600" stop-color="#e2417c"/><stop offset="0.850" stop-color="#ef6a3c"/><stop offset="1" stop-color="#f5a800"/></linearGradient>
<radialGradient id="p3b" cx="0.700" cy="0.150" r="0.450"><stop offset="0" stop-color="#2fe0f5"/><stop offset="1" stop-color="#2fe0f5" stop-opacity="0"/></radialGradient></defs>
<path id="p3p" d="M1238.500 69.900 C1244.500 69.900 1248.600 74.500 1248.600 79.800 C1248.600 84.500 1246 88.500 1243 92 C1240.500 95 1237.500 98 1234 100 C1233.500 97 1235.500 95.500 1234.300 93.500 C1230 91 1227 86 1227 80.500 C1227 74.500 1232 69.900 1238.500 69.900Z" fill="url(#p3)"/>
<path d="M1238.500 69.900 C1244.500 69.900 1248.600 74.500 1248.600 79.800 C1248.600 84.500 1246 88.500 1243 92 C1240.500 95 1237.500 98 1234 100 C1233.500 97 1235.500 95.500 1234.300 93.500 C1230 91 1227 86 1227 80.500 C1227 74.500 1232 69.900 1238.500 69.900Z" fill="url(#p3b)"/>
</svg>
<span style="position:absolute;left:1213px;top:111px;font-family:'Liberation Sans',sans-serif;font-size:13.4px;line-height:1;white-space:pre;color:#303030;font-weight:normal;font-style:normal;transform:scaleX(0.9682);transform-origin:0 50%;">Edit with</span>
<span style="position:absolute;left:1213px;top:128px;font-family:'Liberation Sans',sans-serif;font-size:13.4px;line-height:1;white-space:pre;color:#303030;font-weight:normal;font-style:normal;transform:scaleX(0.9346);transform-origin:0 50%;">Paint 3D</span>
<svg style="left:0;top:0" width="1920" height="1080" shape-rendering="crispEdges">
<rect x="6" y="401" width="1822" height="1" fill="#e1e1e1"/>
<rect x="6" y="425" width="1822" height="1" fill="#e1e1e1"/>
<rect x="6" y="449" width="1822" height="1" fill="#e1e1e1"/>
<rect x="6" y="494" width="1822" height="1" fill="#e1e1e1"/>
<rect x="6" y="518" width="1822" height="1" fill="#e1e1e1"/>
<rect x="6" y="542" width="1822" height="1" fill="#e1e1e1"/>
<rect x="6" y="566" width="1822" height="1" fill="#e1e1e1"/>
<rect x="6" y="590" width="1822" height="1" fill="#e1e1e1"/>
<rect x="6" y="614" width="1822" height="1" fill="#e1e1e1"/>
<rect x="6" y="638" width="1822" height="1" fill="#e1e1e1"/>
<rect x="6" y="662" width="1822" height="1" fill="#e1e1e1"/>
<rect x="6" y="686" width="1822" height="1" fill="#e1e1e1"/>
<rect x="6" y="731" width="1822" height="1" fill="#e1e1e1"/>
<rect x="6" y="755" width="1822" height="1" fill="#e1e1e1"/>
<rect x="6" y="779" width="1822" height="1" fill="#e1e1e1"/>
<rect x="6" y="803" width="1822" height="1" fill="#e1e1e1"/>
<rect x="6" y="827" width="1822" height="1" fill="#e1e1e1"/>
<rect x="6" y="851" width="1822" height="1" fill="#e1e1e1"/>
<rect x="241" y="378" width="1" height="474" fill="#e1e1e1"/>
<rect x="404" y="378" width="1" height="474" fill="#e1e1e1"/>
<rect x="536" y="378" width="1" height="474" fill="#e1e1e1"/>
<rect x="617" y="378" width="1" height="474" fill="#e1e1e1"/>
<rect x="758" y="378" width="1" height="474" fill="#e1e1e1"/>
<rect x="890" y="378" width="1" height="474" fill="#e1e1e1"/>
<rect x="1027" y="378" width="1" height="474" fill="#e1e1e1"/>
<rect x="1107" y="378" width="1" height="474" fill="#e1e1e1"/>
<rect x="1187" y="378" width="1" height="474" fill="#e1e1e1"/>
<rect x="1267" y="378" width="1" height="474" fill="#e1e1e1"/>
<rect x="1347" y="378" width="1" height="474" fill="#e1e1e1"/>
<rect x="1427" y="378" width="1" height="474" fill="#e1e1e1"/>
<rect x="1507" y="378" width="1" height="474" fill="#e1e1e1"/>
<rect x="1587" y="378" width="1" height="474" fill="#e1e1e1"/>
<rect x="1667" y="378" width="1" height="474" fill="#e1e1e1"/>
<rect x="1747" y="378" width="1" height="474" fill="#e1e1e1"/>
<rect x="1827" y="378" width="1" height="474" fill="#e1e1e1"/>
<rect x="241" y="426" width="1" height="23" fill="#fff"/>
<rect x="404" y="426" width="1" height="23" fill="#fff"/>
<rect x="536" y="426" width="1" height="23" fill="#fff"/>
<rect x="241" y="639" width="1" height="23" fill="#fff"/>
<rect x="241" y="663" width="1" height="23" fill="#fff"/>
<rect x="241" y="494" width="164" height="24" fill="#e2efda"/>
<rect x="404" y="494" width="624" height="24" fill="#ffc000"/>
<rect x="241" y="731" width="164" height="24" fill="#e2efda"/>
<rect x="404" y="731" width="624" height="24" fill="#ffc000"/>
<rect x="536" y="663" width="82" height="24" fill="#e2efda"/>
<rect x="6" y="401" width="1022" height="1" fill="#000"/>
<rect x="1027" y="378" width="1" height="24" fill="#000"/>
<rect x="6" y="425" width="1022" height="1" fill="#000"/>
<rect x="6" y="518" width="1022" height="1" fill="#000"/>
<rect x="6" y="662" width="1022" height="1" fill="#000"/>
<rect x="6" y="755" width="1022" height="1" fill="#000"/>
<rect x="1027" y="662" width="1" height="94" fill="#000"/>
</svg>
<span style="position:absolute;left:10px;top:431px;font-family:'Liberation Sans',sans-serif;font-size:16px;line-height:1;white-space:pre;color:#000;font-weight:normal;font-style:italic;letter-spacing:0.37px;">The same iterations could be worked out in one step using SOLVER TOOL</span>
<span style="position:absolute;left:106px;top:475px;font-family:'Liberation Sans',sans-serif;font-size:16px;line-height:1;white-space:pre;color:#000;font-weight:bold;font-style:normal;letter-spacing:0.27px;">Iteration Number</span><span style="position:absolute;left:282px;top:475px;font-family:'Liberation Sans',sans-serif;font-size:16px;line-height:1;white-space:pre;color:#000;font-weight:bold;font-style:normal;letter-spacing:0.35px;">Book debt</span><span style="position:absolute;left:421px;top:453px;font-family:'Liberation Sans',sans-serif;font-size:16px;line-height:1;white-space:pre;color:#000;font-weight:bold;font-style:normal;letter-spacing:0.17px;">Trial value of</span><span style="position:absolute;left:446px;top:475px;font-family:'Liberation Sans',sans-serif;font-size:16px;line-height:1;white-space:pre;color:#000;font-weight:bold;font-style:normal;letter-spacing:0.17px;">equity</span><span style="position:absolute;left:551px;top:475px;font-family:'Liberation Sans',sans-serif;font-size:16px;line-height:1;white-space:pre;color:#000;font-weight:bold;font-style:normal;letter-spacing:1.04px;">WACC</span><span style="position:absolute;left:626px;top:453px;font-family:'Liberation Sans',sans-serif;font-size:16px;line-height:1;white-space:pre;color:#000;font-weight:bold;font-style:normal;letter-spacing:0.26px;">Value of project</span><span style="position:absolute;left:623px;top:475px;font-family:'Liberation Sans',sans-serif;font-size:16px;line-height:1;white-space:pre;color:#000;font-weight:bold;font-style:normal;letter-spacing:0.45px;">based on WACC</span><span style="position:absolute;left:770px;top:453px;font-family:'Liberation Sans',sans-serif;font-size:16px;line-height:1;white-space:pre;color:#000;font-weight:bold;font-style:normal;letter-spacing:0.12px;">Imputed value</span><span style="position:absolute;left:791px;top:475px;font-family:'Liberation Sans',sans-serif;font-size:16px;line-height:1;white-space:pre;color:#000;font-weight:bold;font-style:normal;letter-spacing:0.04px;">of equity</span><span style="position:absolute;left:947px;top:475px;font-family:'Liberation Sans',sans-serif;font-size:16px;line-height:1;white-space:pre;color:#000;font-weight:bold;font-style:normal;letter-spacing:-0.29px;">diff</span>
<span style="position:absolute;left:106px;top:712px;font-family:'Liberation Sans',sans-serif;font-size:16px;line-height:1;white-space:pre;color:#000;font-weight:bold;font-style:normal;letter-spacing:0.27px;">Iteration Number</span><span style="position:absolute;left:282px;top:712px;font-family:'Liberation Sans',sans-serif;font-size:16px;line-height:1;white-space:pre;color:#000;font-weight:bold;font-style:normal;letter-spacing:0.35px;">Book debt</span><span style="position:absolute;left:421px;top:690px;font-family:'Liberation Sans',sans-serif;font-size:16px;line-height:1;white-space:pre;color:#000;font-weight:bold;font-style:normal;letter-spacing:0.17px;">Trial value of</span><span style="position:absolute;left:446px;top:712px;font-family:'Liberation Sans',sans-serif;font-size:16px;line-height:1;white-space:pre;color:#000;font-weight:bold;font-style:normal;letter-spacing:0.17px;">equity</span><span style="position:absolute;left:551px;top:712px;font-family:'Liberation Sans',sans-serif;font-size:16px;line-height:1;white-space:pre;color:#000;font-weight:bold;font-style:normal;letter-spacing:1.04px;">WACC</span><span style="position:absolute;left:626px;top:690px;font-family:'Liberation Sans',sans-serif;font-size:16px;line-height:1;white-space:pre;color:#000;font-weight:bold;font-style:normal;letter-spacing:0.26px;">Value of project</span><span style="position:absolute;left:623px;top:712px;font-family:'Liberation Sans',sans-serif;font-size:16px;line-height:1;white-space:pre;color:#000;font-weight:bold;font-style:normal;letter-spacing:0.45px;">based on WACC</span><span style="position:absolute;left:770px;top:690px;font-family:'Liberation Sans',sans-serif;font-size:16px;line-height:1;white-space:pre;color:#000;font-weight:bold;font-style:normal;letter-spacing:0.12px;">Imputed value</span><span style="position:absolute;left:791px;top:712px;font-family:'Liberation Sans',sans-serif;font-size:16px;line-height:1;white-space:pre;color:#000;font-weight:bold;font-style:normal;letter-spacing:0.04px;">of equity</span><span style="position:absolute;left:947px;top:712px;font-family:'Liberation Sans',sans-serif;font-size:16px;line-height:1;white-space:pre;color:#000;font-weight:bold;font-style:normal;letter-spacing:-0.29px;">diff</span>
<span style="position:absolute;left:119.5px;top:500px;font-family:'Liberation Sans',sans-serif;font-size:16px;line-height:1;white-space:pre;color:#000;font-weight:normal;font-style:normal;letter-spacing:-0.91px;">1</span><span style="position:absolute;left:252px;top:500px;font-family:'Liberation Sans',sans-serif;font-size:16px;line-height:1;white-space:pre;color:#000;font-weight:normal;font-style:normal;letter-spacing:-0.91px;">$</span><span style="position:absolute;left:293px;top:500px;font-family:'Liberation Sans',sans-serif;font-size:16px;line-height:1;white-space:pre;color:#000;font-weight:normal;font-style:normal;letter-spacing:0.06px;">80,000,000.00</span>
<span style="position:absolute;left:119.5px;top:737px;font-family:'Liberation Sans',sans-serif;font-size:16px;line-height:1;white-space:pre;color:#000;font-weight:normal;font-style:normal;letter-spacing:-0.91px;">1</span><span style="position:absolute;left:252px;top:737px;font-family:'Liberation Sans',sans-serif;font-size:16px;line-height:1;white-space:pre;color:#000;font-weight:normal;font-style:normal;letter-spacing:-0.91px;">$</span><span style="position:absolute;left:293px;top:737px;font-family:'Liberation Sans',sans-serif;font-size:16px;line-height:1;white-space:pre;color:#000;font-weight:normal;font-style:normal;letter-spacing:0.06px;">80,000,000.00</span>
<span style="position:absolute;left:9px;top:643px;font-family:'Liberation Sans',sans-serif;font-size:16px;line-height:1;white-space:pre;color:#000;font-weight:bold;font-style:normal;letter-spacing:0.66px;">c.</span>
<span style="position:absolute;left:28px;top:643px;font-family:'Liberation Sans',sans-serif;font-size:16px;line-height:1;white-space:pre;color:#000;font-weight:normal;font-style:normal;letter-spacing:0.14px;">We solve this part using solver</span>
<span style="position:absolute;left:10px;top:668px;font-family:'Liberation Sans',sans-serif;font-size:16px;line-height:1;white-space:pre;color:#000;font-weight:normal;font-style:italic;letter-spacing:0.32px;">Project FCFs are growing at 2.5%</span>
<span style="position:absolute;left:555.5px;top:667px;font-family:'Liberation Sans',sans-serif;font-size:16.4px;line-height:1;white-space:pre;color:#000;font-weight:normal;font-style:normal;letter-spacing:-0.62px;">2.50%</span>
<svg style="left:0;top:0" width="1920" height="1080"><rect x="1027.0" y="425.0" width="710.9999999999999" height="146.99999999999997" fill="#ffffcc" stroke="#7fa03c" stroke-width="3.6"/></svg>
<span style="position:absolute;left:1031px;top:430px;font-family:'Liberation Sans',sans-serif;font-size:16px;line-height:1;white-space:pre;color:#2a2a2a;font-weight:normal;font-style:normal;word-spacing:2.27px;">To complete row 73:</span>
<span style="position:absolute;left:1031px;top:468px;font-family:'Liberation Sans',sans-serif;font-size:16px;line-height:1;white-space:pre;color:#2a2a2a;font-weight:normal;font-style:normal;word-spacing:1.52px;">1. Start with a trial value of equity (D73) with any random number, for example, the book value</span>
<span style="position:absolute;left:1031px;top:487px;font-family:'Liberation Sans',sans-serif;font-size:16px;line-height:1;white-space:pre;color:#2a2a2a;font-weight:normal;font-style:normal;word-spacing:1.82px;">of equity. Note that you should mannual enter the number without an equal sign.</span>
<span style="position:absolute;left:1031px;top:505px;font-family:'Liberation Sans',sans-serif;font-size:16px;line-height:1;white-space:pre;color:#2a2a2a;font-weight:normal;font-style:normal;word-spacing:1.70px;">2. Fill in WACC, project value based on WACC, imputed equity value, and diff with formula as in</span>
<span style="position:absolute;left:1031px;top:524px;font-family:'Liberation Sans',sans-serif;font-size:16px;line-height:1;white-space:pre;color:#2a2a2a;font-weight:normal;font-style:normal;word-spacing:0.64px;">part b.</span>
<span style="position:absolute;left:1031px;top:544px;font-family:'Liberation Sans',sans-serif;font-size:16px;line-height:1;white-space:pre;color:#2a2a2a;font-weight:normal;font-style:normal;word-spacing:1.69px;">3. Apply Goal Seek: set diff (H73) to zero by changing trial equity value (D73).</span>
<svg style="left:0;top:0" width="1920" height="1080"><rect x="1044.8999999999999" y="664.6999999999999" width="710.9" height="147.10000000000005" fill="#ffffcc" stroke="#7fa03c" stroke-width="3.6"/></svg>
<span style="position:absolute;left:1049px;top:670px;font-family:'Liberation Sans',sans-serif;font-size:16px;line-height:1;white-space:pre;color:#2a2a2a;font-weight:normal;font-style:normal;word-spacing:1.99px;">To complete part c, follow the same procedure used in row 73, with one difference:</span>
<span style="position:absolute;left:1049px;top:708px;font-family:'Liberation Sans',sans-serif;font-size:16px;line-height:1;white-space:pre;color:#2a2a2a;font-weight:normal;font-style:normal;word-spacing:1.81px;">With the constant growth rate of 2.5%, project value based on WACC should equal to project</span>
<span style="position:absolute;left:1049px;top:726px;font-family:'Liberation Sans',sans-serif;font-size:16px;line-height:1;white-space:pre;color:#2a2a2a;font-weight:normal;font-style:normal;letter-spacing:0.35px;">FCF/(WACC-growth rate).</span>
<svg style="left:0;top:0" width="1920" height="1080">
<line x1="500" y1="808.5" x2="551" y2="775" stroke="#7fa03c" stroke-width="3.4"/>
<polygon points="560,769 546,771 552,780" fill="#7fa03c"/>
<line x1="778" y1="804.5" x2="735" y2="771.5" stroke="#7fa03c" stroke-width="3.4"/>
<polygon points="726.5,765 740,768 733.5,776.5" fill="#7fa03c"/>
</svg>
<div style="position:absolute;left:374px;top:807px;width:154px;height:45px;background:#7fa03c"></div>
<div style="position:absolute;left:378px;top:811px;width:146px;height:41px;background:#ffffcc"></div>
<span style="position:absolute;left:397px;top:826px;font-family:'Liberation Sans',sans-serif;font-size:16px;line-height:1;white-space:pre;color:#2a2a2a;font-weight:normal;font-style:normal;letter-spacing:0.50px;">Project WACC</span>
<div style="position:absolute;left:733px;top:803px;width:117px;height:49px;background:#7fa03c"></div>
<div style="position:absolute;left:737px;top:807px;width:109px;height:41px;background:#ffffcc"></div>
<span style="position:absolute;left:743px;top:821px;font-family:'Liberation Sans',sans-serif;font-size:16px;line-height:1;white-space:pre;color:#2a2a2a;font-weight:normal;font-style:normal;letter-spacing:0.25px;">Project Value</span>
<svg style="left:0;top:0" width="1920" height="1080" shape-rendering="crispEdges">
<line x1="5" y1="377.5" x2="1829" y2="377.5" stroke="#0078d7" stroke-width="1" stroke-dasharray="4 4"/>
<line x1="5" y1="852.5" x2="1829" y2="852.5" stroke="#0078d7" stroke-width="1" stroke-dasharray="4 4"/>
<line x1="5.5" y1="377" x2="5.5" y2="853" stroke="#0078d7" stroke-width="1" stroke-dasharray="4 4"/>
<line x1="1828.5" y1="377" x2="1828.5" y2="853" stroke="#0078d7" stroke-width="1" stroke-dasharray="4 4"/>
</svg>
<div style="position:absolute;left:3px;top:375px;width:5px;height:5px;background:#fff;border:1px solid #555"></div>
<div style="position:absolute;left:915px;top:375px;width:5px;height:5px;background:#fff;border:1px solid #555"></div>
<div style="position:absolute;left:1826px;top:375px;width:5px;height:5px;background:#fff;border:1px solid #555"></div>
<div style="position:absolute;left:3px;top:613px;width:5px;height:5px;background:#fff;border:1px solid #555"></div>
<div style="position:absolute;left:1826px;top:613px;width:5px;height:5px;background:#fff;border:1px solid #555"></div>
<div style="position:absolute;left:3px;top:850px;width:5px;height:5px;background:#fff;border:1px solid #555"></div>
<div style="position:absolute;left:915px;top:850px;width:5px;height:5px;background:#fff;border:1px solid #555"></div>
<div style="position:absolute;left:1826px;top:850px;width:5px;height:5px;background:#fff;border:1px solid #555"></div>
<svg style="left:0;top:0" width="1920" height="1080">
<path d="M1905 185 L1909.5 180.2 L1914 185" fill="none" stroke="#505050" stroke-width="1.7"/>
<path d="M1905 964 L1909.5 968.8 L1914 964" fill="none" stroke="#505050" stroke-width="1.7"/>
<path d="M12.3 983 L7.5 987.5 L12.3 992" fill="none" stroke="#505050" stroke-width="1.7"/>
<path d="M1886.5 983 L1891.3 987.5 L1886.5 992" fill="none" stroke="#505050" stroke-width="1.7"/>
</svg>
<div style="position:absolute;left:199px;top:1000px;width:1px;height:28px;background:#d7d7d7"></div>
<div style="position:absolute;left:399px;top:1000px;width:1px;height:28px;background:#d7d7d7"></div>
<div style="position:absolute;left:599px;top:1000px;width:1px;height:28px;background:#d7d7d7"></div>
<div style="position:absolute;left:799px;top:1000px;width:1px;height:28px;background:#d7d7d7"></div>
<div style="position:absolute;left:1676px;top:1000px;width:1px;height:28px;background:#d7d7d7"></div>
<svg style="left:0;top:0" width="1920" height="1080">
<g stroke="#2c4a75" stroke-width="1.2" fill="none"><path d="M11.5 1007 V1022 M4 1014.5 H19"/></g>
<g fill="#2c4a75"><path d="M11.5 1005.5 L14 1008.7 H9Z M11.5 1023.5 L14 1020.3 H9Z M2.8 1014.5 L6 1012 V1017Z M20.2 1014.5 L17 1012 V1017Z"/></g>
<g stroke="#2c4a75" fill="none"><rect x="207.5" y="1006.5" width="15" height="13" stroke-dasharray="1 1" shape-rendering="crispEdges"/><path d="M205.5 1008 V1019 M208 1021.5 H222" stroke-width="1.1"/></g>
<g fill="#2c4a75"><path d="M205.5 1005.8 L207.3 1008.3 H203.7Z M223.5 1021.5 L221 1019.7 V1023.3Z"/></g>
<rect x="407.500" y="1006.500" width="15" height="13" fill="#e6eff7" stroke="#5d7ea8"/>
<path d="M405.5 1008 V1021.500 H421" fill="none" stroke="#2c4a75" stroke-width="1.100"/>
<g fill="#2c4a75"><path d="M405.5 1005.8 L407.3 1008.3 H403.7Z M423.3 1021.5 L420.800 1019.7 V1023.3Z"/></g>
</svg>
<span style="position:absolute;left:428px;top:1009px;font-family:'Liberation Sans',sans-serif;font-size:14.5px;line-height:1;white-space:pre;color:#1a1a1a;font-weight:normal;font-style:normal;letter-spacing:0.14px;">1920 × 1080px</span>
<span style="position:absolute;left:1700px;top:1009px;font-family:'Liberation Sans',sans-serif;font-size:14.5px;line-height:1;white-space:pre;color:#1a1a1a;font-weight:normal;font-style:normal;letter-spacing:-1.03px;">100%</span>
<div style="position:absolute;left:1743px;top:1004px;width:20px;height:20px;border-radius:50%;background:linear-gradient(#ffffff 0%,#f4f4f4 50%,#d9d9d9 100%);border:1px solid #8f8f8f"></div><div style="position:absolute;left:1748px;top:1013px;width:10px;height:2px;background:#5a5a5a"></div>
<div style="position:absolute;left:1895px;top:1004px;width:20px;height:20px;border-radius:50%;background:linear-gradient(#ffffff 0%,#f4f4f4 50%,#d9d9d9 100%);border:1px solid #8f8f8f"></div><div style="position:absolute;left:1900px;top:1013px;width:10px;height:2px;background:#5a5a5a"></div><div style="position:absolute;left:1904px;top:1009px;width:2px;height:10px;background:#5a5a5a"></div>
<div style="position:absolute;left:1777px;top:1011px;width:105px;height:5px;background:#e2e7e7;border:1px solid #d2d6d6"></div>
<svg style="left:1823px;top:1003px" width="13" height="24" viewBox="0 0 13 24"><path d="M0 0 H13 V16 L6.5 23.5 L0 16Z" fill="#0078d7"/></svg>
<svg style="left:20px;top:1045px" width="21" height="21" viewBox="0 0 21 21">
<path d="M0 3 L8.5 1.8 V9.8 H0Z M9.7 1.6 L20.5 0 V9.8 H9.7Z M0 11 H8.500 V19.2 L0 18Z M9.7 11 H20.5 V21 L9.7 19.4Z" fill="#fff"/></svg>
<div style="position:absolute;left:60px;top:1030px;width:360px;height:50px;background:#f2f2f2;border-top:1px solid #d0d0d0"></div>
<svg style="left:74px;top:1044px" width="24" height="24" viewBox="0 0 24 24">
<circle cx="14" cy="9" r="6.2" fill="none" stroke="#1a1a1a" stroke-width="1.5"/><path d="M9.7 13.5 L1.5 21.800" stroke="#1a1a1a" stroke-width="1.6"/></svg>
<span style="position:absolute;left:110px;top:1048px;font-family:'Liberation Sans',sans-serif;font-size:17.5px;line-height:1;white-space:pre;color:#2a2a2a;font-weight:normal;font-style:normal;letter-spacing:0.46px;">Type here to search</span>
<svg style="left:0;top:0" width="1920" height="1080">
<g fill="none" stroke="#fff" stroke-width="1.350"><rect x="440.600" y="1050.600" width="11.900" height="7.900"/><path d="M440.600 1045 V1048.400 H452.500 V1045 M440.600 1064 V1060.600 H452.500 V1064 M458.400 1045 V1049.600 M458.400 1055.400 V1064"/></g><rect x="457" y="1051" width="3" height="3" fill="#fff"/></svg>
<div style="position:absolute;left:918px;top:1030px;width:56px;height:50px;background:#46555c"></div>
<div style="position:absolute;left:974px;top:1030px;width:5px;height:50px;background:#3b4a51"></div>
<div style="position:absolute;left:489px;top:1077px;width:51px;height:3px;background:#76b9ed"></div>
<div style="position:absolute;left:613px;top:1077px;width:51px;height:3px;background:#76b9ed"></div>
<div style="position:absolute;left:675px;top:1077px;width:40px;height:3px;background:#76b9ed"></div>
<div style="position:absolute;left:715px;top:1077px;width:1px;height:3px;background:#24333b"></div>
<div style="position:absolute;left:716px;top:1077px;width:10px;height:3px;background:#4f83ad"></div>
<div style="position:absolute;left:737px;top:1077px;width:51px;height:3px;background:#76b9ed"></div>
<div style="position:absolute;left:799px;top:1077px;width:51px;height:3px;background:#76b9ed"></div>
<div style="position:absolute;left:861px;top:1077px;width:40px;height:3px;background:#76b9ed"></div>
<div style="position:absolute;left:901px;top:1077px;width:1px;height:3px;background:#24333b"></div>
<div style="position:absolute;left:902px;top:1077px;width:10px;height:3px;background:#4f83ad"></div>
<div style="position:absolute;left:918px;top:1077px;width:56px;height:3px;background:#76b9ed"></div>
<div style="position:absolute;left:975px;top:1077px;width:4px;height:3px;background:#4f83ad"></div>
<svg style="left:500px;top:1042px" width="28" height="24" viewBox="0 0 28 24">
<path d="M0 2 Q0 0.500 1.500 0.500 H9.500 L12 3.500 H0Z" fill="#e8a317"/>
<rect x="0" y="3" width="28" height="20" rx="1" fill="#ffd45e"/>
<path d="M0 3 H12 L13.500 4.500 H28 V8 H0Z" fill="#ffca3a"/>
<path d="M5 23.500 V14 H23 V23.500 H19 V18 H9 V23.500Z" fill="#3d9ae8"/>
<rect x="9" y="18" width="10" height="5" fill="#f7b92c"/>
</svg>
<svg style="left:561px;top:1040px" width="31" height="30" viewBox="0 0 31 30">
<path d="M0.500 13 L15.500 0.500 L30.500 13 V29 H0.500Z" fill="#0f6cbd"/>
<path d="M3 11 H28 L15.500 23Z" fill="#f3f6fa"/><path d="M3 11 H28 L15.500 17Z" fill="#dfe6ee"/>
<path d="M0.500 13 L15.500 24 L30.500 13 V29 H0.500Z" fill="#28a8ea"/>
<path d="M0.500 29 L12 21.500 L15.500 24 L19 21.500 L30.500 29Z" fill="#1490df"/>
</svg>
<div style="position:absolute;left:581px;top:1053px;width:22px;height:22px;border-radius:50%;background:#2c3a42;border:1.5px solid #8d979c"></div>
<span style="position:absolute;left:584.5px;top:1058px;font-family:'Liberation Sans',sans-serif;font-size:14px;line-height:1;white-space:pre;color:#fff;font-weight:bold;font-style:normal;letter-spacing:-0.58px;">18</span>
<svg style="left:623px;top:1040px" width="30" height="30" viewBox="-15 -15 30 30">
<circle r="15" fill="#fff"/>
<path d="M0 0 L-12.990 -7.500 A15 15 0 0 1 12.990 -7.500Z" fill="#ea4335"/>
<path d="M0 0 L12.990 -7.500 A15 15 0 0 1 0 15Z" fill="#fbbc05"/>
<path d="M0 0 L0 15 A15 15 0 0 1 -12.990 -7.500Z" fill="#34a853"/>
<path d="M-12.990 -7.500 A15 15 0 0 1 12.990 -7.500 L0 -7.500Z" fill="#ea4335"/>
<path d="M12.990 -7.500 A15 15 0 0 1 0 15 L6.500 3.750Z" fill="#fbbc05"/>
<path d="M0 15 A15 15 0 0 1 -12.990 -7.500 L-6.500 3.750Z" fill="#34a853"/>
<circle r="7.200" fill="#fff"/><circle r="5.700" fill="#4285f4"/>
</svg>
<svg style="left:685px;top:1041px" width="30" height="28" viewBox="0 0 30 28">
<rect x="7" y="0" width="23" height="28" rx="1.500" fill="#41a5ee"/>
<rect x="7" y="7" width="23" height="7" fill="#2b7cd3"/><rect x="7" y="14" width="23" height="7" fill="#185abd"/><path d="M7 21 H30 V26.500 Q30 28 28.500 28 H8.500 Q7 28 7 26.500Z" fill="#103f91"/>
<rect x="0" y="6" width="16" height="16" rx="1.500" fill="#185abd"/>
</svg>
<span style="position:absolute;left:687px;top:1050px;font-family:'Liberation Sans',sans-serif;font-size:12px;line-height:1;white-space:pre;color:#fff;font-weight:bold;font-style:normal;letter-spacing:0.67px;">W</span>
<svg style="left:749px;top:1040px" width="25" height="31" viewBox="0 0 25 31">
<rect x="0.500" y="0.500" width="24" height="30" rx="2" fill="#7d8791" stroke="#666f78"/>
<rect x="3.500" y="3.500" width="18" height="5" fill="#49d3f2"/>
<g fill="#dfe3e8"><rect x="3.500" y="11" width="5" height="5"/><rect x="10" y="11" width="5" height="5"/><rect x="16.500" y="11" width="5" height="5"/>
<rect x="3.500" y="17.500" width="5" height="5"/><rect x="10" y="17.500" width="5" height="5"/><rect x="3.500" y="24" width="5" height="5"/><rect x="10" y="24" width="5" height="5"/></g>
<rect x="16.500" y="17.500" width="5" height="11.500" fill="#0f3f8c"/>
</svg>
<svg style="left:809px;top:1040px" width="30" height="30" viewBox="0 0 30 30">
<defs><linearGradient id="eg1" x1="0" y1="0" x2="1" y2="0"><stop offset="0" stop-color="#2fb0e8"/><stop offset="0.600" stop-color="#3ac27c"/><stop offset="1" stop-color="#8fdc4a"/></linearGradient>
<linearGradient id="eg2" x1="0" y1="0" x2="0" y2="1"><stop offset="0" stop-color="#1b8ad6"/><stop offset="1" stop-color="#0f4fa0"/></linearGradient></defs>
<circle cx="15" cy="15" r="15" fill="url(#eg2)"/>
<path d="M1 10 C4 2 12 -1 19 1 C27 3.500 31 10 29.500 16 C28.500 20 24 21.500 20.500 20 C18.500 19 19.500 17 19.500 15 C19.500 11 15.500 8.500 11.500 9.500 C6.500 10.500 3.500 15 4 20 C1.500 17 0 13.500 1 10Z" fill="url(#eg1)"/>
<path d="M11.500 9.500 C6.500 10.500 3.500 15 4 20 C5 26 10.500 30 16 30 C20 30 23.500 28.500 26 26 C22 27.500 17.500 26.500 15 23.500 C12.500 20.500 12.500 16.500 14.500 14.500 C15.500 13.500 17.500 13.500 19.300 13.800 C18.500 10.500 15 8.800 11.500 9.500Z" fill="#1565b8"/>
<path d="M14.500 14.500 C12.500 16.500 12.500 20.500 15 23.500 C17.500 26.500 22 27.500 26 26 C27.500 24.500 28.500 23 29 21.500 C26 23.500 21.500 22.500 20.500 20 C18.500 19 19.500 17 19.500 15 C19.500 14.500 19.400 14.100 19.300 13.800 C17.500 13.500 15.500 13.500 14.500 14.500Z" fill="#24333b"/>
</svg>
<svg style="left:871px;top:1041px" width="30" height="28" viewBox="0 0 30 28">
<path d="M8.500 0 H18.500 V7 H7 V1.500 Q7 0 8.500 0Z" fill="#21a366"/><path d="M18.500 0 H28.500 Q30 0 30 1.500 V7 H18.500Z" fill="#33c481"/>
<rect x="7" y="7" width="11.500" height="7" fill="#107c41"/><rect x="18.500" y="7" width="11.500" height="7" fill="#21a366"/>
<rect x="7" y="14" width="11.500" height="7" fill="#185c37"/><rect x="18.500" y="14" width="11.500" height="7" fill="#107c41"/>
<path d="M7 21 H30 V26.500 Q30 28 28.500 28 H8.500 Q7 28 7 26.500Z" fill="#185c37"/>
<rect x="0" y="6" width="16" height="16" rx="1.500" fill="#107c41"/>
</svg>
<span style="position:absolute;left:875px;top:1050px;font-family:'Liberation Sans',sans-serif;font-size:12px;line-height:1;white-space:pre;color:#fff;font-weight:bold;font-style:normal;letter-spacing:-0.02px;">X</span>
<svg style="left:931px;top:1039px" width="34" height="32" viewBox="0 0 34 32">
<path d="M2 19 C1 11 9 5 17.500 6 C24.500 7 28.500 12 27 17.500 C25.500 23 20.500 23.500 18 22 C16 21 14 23 14.500 25 C15 27.500 11.500 29 7.500 26.500 C4.500 24.500 2.500 22 2 19Z" fill="#dbe6f2" stroke="#a9bbd3" stroke-width="0.800"/>
<circle cx="7.500" cy="17.500" r="2.400" fill="#d94a3d"/><circle cx="11.500" cy="12" r="2.400" fill="#6bbf4a"/><circle cx="17.500" cy="10.500" r="2.400" fill="#f3b62f"/><circle cx="22.500" cy="13.500" r="2.200" fill="#e06a2a"/>
<path d="M17 31.500 L27 8.500 L29.300 9.500 L18.800 31.800Z" fill="#ef8a27"/>
<path d="M26.800 9 L28.500 2.500 C29.300 0.500 31.800 1 32.300 3 L29.500 10Z" fill="#d9a867"/>
</svg>
<svg style="left:1297px;top:1040px" width="34" height="30" viewBox="0 0 34 30">
<defs><linearGradient id="cl" x1="0" y1="0" x2="0" y2="1"><stop offset="0" stop-color="#f4f7fd"/><stop offset="0.500" stop-color="#c7d6f3"/><stop offset="1" stop-color="#8fb0ec"/></linearGradient></defs>
<path d="M14 1 C19 3 20.500 9 17 13.500 C13.500 17 8 16.500 5 13.500 C10 14 15.500 9 14 1Z" fill="#f7a62b"/>
<path d="M8 29.500 C3 29.500 0.500 26.500 0.500 23.500 C0.500 20.500 3 18 6 18 C7 14 11 12 14.500 13.500 C17.500 14.500 19 17 19.500 19 C21.500 16.500 26 17 27.500 20 C31 20 33 22.500 33 25 C33 27.500 31 29.500 28 29.500Z" fill="url(#cl)"/>
</svg>
<span style="position:absolute;left:1340px;top:1047px;font-family:'Liberation Sans',sans-serif;font-size:18px;line-height:1;white-space:pre;color:#fff;font-weight:normal;font-style:normal;letter-spacing:-1.53px;">71</span>
<span style="position:absolute;left:1358.6px;top:1049px;font-family:'Liberation Sans',sans-serif;font-size:16px;line-height:1;white-space:pre;color:#fff;font-weight:normal;font-style:normal;">°</span>
<span style="position:absolute;left:1365.5px;top:1047px;font-family:'Liberation Sans',sans-serif;font-size:18px;line-height:1;white-space:pre;color:#fff;font-weight:normal;font-style:normal;transform:scaleX(.78);transform-origin:0 0;">F</span>
<span style="position:absolute;left:1384px;top:1047px;font-family:'Liberation Sans',sans-serif;font-size:18px;line-height:1;white-space:pre;color:#fff;font-weight:normal;font-style:normal;letter-spacing:0.16px;">Mostly cloudy</span>
<svg style="left:0;top:0" width="1920" height="1080">
<g fill="none" stroke="#fff" stroke-width="1.400">
<path d="M1532.500 1059 L1540 1051.500 L1547.500 1059"/>
<rect x="1574" y="1049.500" width="10" height="11" rx="2"/><path d="M1584 1053.500 L1588.500 1051 V1059.500 L1584 1057"/><path d="M1575 1046.800 Q1579.500 1044.500 1584 1046.800 M1575 1063.200 Q1579.500 1065.500 1584 1063.200" stroke-width="1.100"/>
<path d="M1615.500 1049.500 H1628.500 V1052.500 H1630 V1057 H1628.500 V1060.500 H1613 V1056"/><path d="M1611 1048 V1051 M1614 1048 V1051 M1610 1051 H1615 V1054 Q1612.500 1056.500 1610 1054Z M1612.500 1056 V1060" stroke-width="1.100"/>
<path d="M1653 1062 A15 15 0 0 1 1668 1048 M1657.500 1062.500 A10.500 10.500 0 0 1 1668.500 1052.500 M1662 1062.500 A6 6 0 0 1 1668.500 1057"/>
<path d="M1691 1052 H1694.500 L1699 1047.500 V1062 L1694.500 1057.500 H1691Z"/><path d="M1702 1051.500 L1708.500 1058 M1708.500 1051.500 L1702 1058" stroke-width="1.200"/>
<path d="M1749.500 1046 C1751 1044.500 1753 1044.800 1753.800 1046 C1754.500 1047.200 1754.200 1048.500 1753 1050 L1744.500 1062 L1741 1063.500 L1741.500 1060Z" stroke-width="1.300"/><path d="M1741 1057.500 C1736.500 1058.500 1734.500 1061.500 1736 1063.500 C1737.500 1065.500 1740.500 1064 1741.500 1062 M1750 1054 C1754 1053 1756.500 1051 1755.500 1049" stroke-width="1.300"/>
</g>
<circle cx="1666.500" cy="1061" r="1.600" fill="#fff"/>
<path d="M1869 1045 H1889 V1062 H1874 L1869 1066Z" fill="#fff"/>
<g stroke="#24333b" stroke-width="1.200"><path d="M1873 1050.500 H1885 M1873 1054.500 H1885 M1873 1058.500 H1881"/></g>
</svg>
<span style="position:absolute;left:1783px;top:1036px;font-family:'Liberation Sans',sans-serif;font-size:14.2px;line-height:1;white-space:pre;color:#fff;font-weight:normal;font-style:normal;letter-spacing:-0.25px;">12:48 PM</span>
<span style="position:absolute;left:1778px;top:1060px;font-family:'Liberation Sans',sans-serif;font-size:14.2px;line-height:1;white-space:pre;color:#fff;font-weight:normal;font-style:normal;letter-spacing:0.61px;">3/10/2023</span>
<div style="position:absolute;left:1877px;top:1053px;width:23px;height:23px;border-radius:50%;background:#3a4247;border:1.5px solid #7d868b"></div>
<span style="position:absolute;left:1880.5px;top:1058px;font-family:'Liberation Sans',sans-serif;font-size:14.5px;line-height:1;white-space:pre;color:#fff;font-weight:bold;font-style:normal;letter-spacing:0.36px;">20</span>
<div style="position:absolute;left:1914px;top:1030px;width:1px;height:50px;background:#5d6a70"></div>
</body></html>
